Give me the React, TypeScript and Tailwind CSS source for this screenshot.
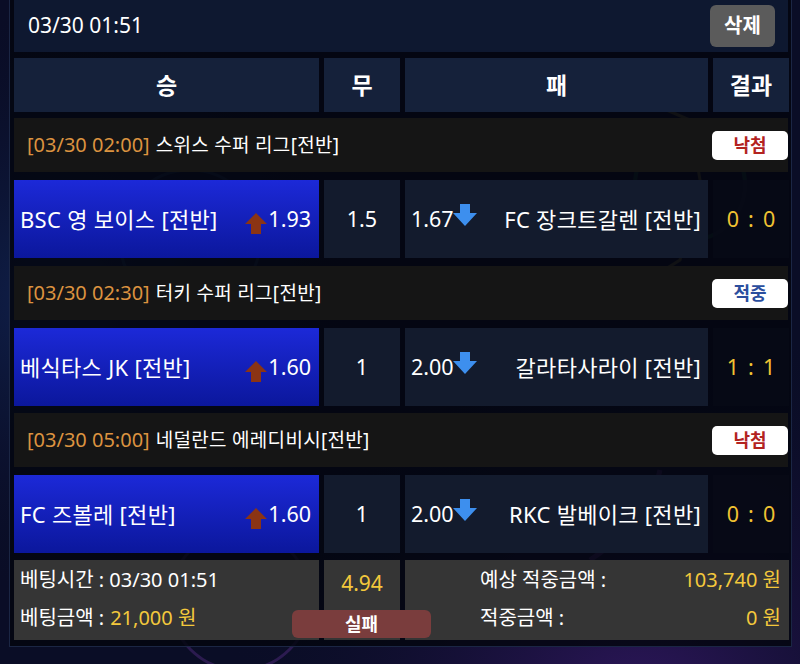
import React from "react";

const FONT = { fontFamily: '"Noto Sans", "Noto Sans CJK KR", sans-serif' };

function UpArrow() {
  return (
    <svg width="22" height="21" viewBox="0 0 22 21" className="shrink-0">
      <path d="M11 0 L22 11 L16 11 L16 21 L6 21 L6 11 L0 11 Z" fill="#8b3414" />
    </svg>
  );
}

function DownArrow() {
  return (
    <svg width="24" height="22" viewBox="0 0 24 22" className="shrink-0">
      <path d="M7 0 L17 0 L17 9 L24 9 L12 22 L0 9 L7 9 Z" fill="#3d8fee" />
    </svg>
  );
}

type Match = {
  time: string;
  league: string;
  status: "낙첨" | "적중";
  home: string;
  homeOdds: string;
  draw: string;
  awayOdds: string;
  away: string;
  score: [string, string];
  mt: string;
};

const matches: Match[] = [
  {
    time: "[03/30 02:00]",
    league: "스위스 수퍼 리그[전반]",
    status: "낙첨",
    home: "BSC 영 보이스 [전반]",
    homeOdds: "1.93",
    draw: "1.5",
    awayOdds: "1.67",
    away: "FC 장크트갈렌 [전반]",
    score: ["0", "0"],
    mt: "mt-[6px]",
  },
  {
    time: "[03/30 02:30]",
    league: "터키 수퍼 리그[전반]",
    status: "적중",
    home: "베식타스 JK [전반]",
    homeOdds: "1.60",
    draw: "1",
    awayOdds: "2.00",
    away: "갈라타사라이 [전반]",
    score: ["1", "1"],
    mt: "mt-[8px]",
  },
  {
    time: "[03/30 05:00]",
    league: "네덜란드 에레디비시[전반]",
    status: "낙첨",
    home: "FC 즈볼레 [전반]",
    homeOdds: "1.60",
    draw: "1",
    awayOdds: "2.00",
    away: "RKC 발베이크 [전반]",
    score: ["0", "0"],
    mt: "mt-[7px]",
  },
];

function MatchBlock({ m }: { m: Match }) {
  return (
    <>
      <div className={`${m.mt} h-[54px] bg-[#151515] flex items-center pl-[13px]`}>
        <span className="text-[#dc9340] text-[20px]">{m.time}</span>
        <span className="text-white ml-[6px] text-[19px] tracking-[0.3px]">{m.league}</span>
        <div
          className={`ml-auto w-[76px] h-[29px] bg-white rounded-[5px] flex items-center justify-center font-bold text-[18px] ${
            m.status === "낙첨" ? "text-[#b3231f]" : "text-[#2b4e9e]"
          }`}
        >
          {m.status}
        </div>
      </div>
      <div className="mt-[8px] h-[78px] grid grid-cols-[305px_76px_303px_76px] gap-x-[5px] text-white text-[21.5px]">
        <div className="bg-gradient-to-b from-[#1c29d8] to-[#0b179c] flex items-center pl-[6px] pr-[8px]">
          <span className="text-[22px] tracking-[0.3px]">{m.home}</span>
          <div className="ml-auto flex items-center gap-[1px]">
            <div className="mt-[8px]">
              <UpArrow />
            </div>
            <span>{m.homeOdds}</span>
          </div>
        </div>
        <div className="bg-[#131b2d] flex items-center justify-center">{m.draw}</div>
        <div className="bg-[#131b2d] flex items-center pl-[6px] pr-[7px]">
          <span>{m.awayOdds}</span>
          <div className="-mt-[8px] -ml-[1px]">
            <DownArrow />
          </div>
          <span className="ml-auto text-[22px] tracking-[0.3px]">{m.away}</span>
        </div>
        <div className="bg-[#070a17]/80 flex items-center justify-center gap-[9px] text-[#f0c232]">
          <span>{m.score[0]}</span>
          <span>:</span>
          <span>{m.score[1]}</span>
        </div>
      </div>
    </>
  );
}

function Background() {
  return (
    <svg className="absolute inset-0" width="800" height="664" viewBox="0 0 800 664">
      <defs>
        <radialGradient id="g1" cx="640" cy="720" r="420" gradientUnits="userSpaceOnUse">
          <stop offset="0" stopColor="#3a1a6e" stopOpacity="0.8" />
          <stop offset="1" stopColor="#0a0d26" stopOpacity="0" />
        </radialGradient>
        <radialGradient id="g2" cx="60" cy="300" r="300" gradientUnits="userSpaceOnUse">
          <stop offset="0" stopColor="#14306a" stopOpacity="0.6" />
          <stop offset="1" stopColor="#0a0d26" stopOpacity="0" />
        </radialGradient>
      </defs>
      <rect width="800" height="664" fill="#0a0d26" />
      <rect width="800" height="664" fill="url(#g2)" />
      <rect width="800" height="664" fill="url(#g1)" />
      <path d="M655 105 L690 120 L700 180 L680 260 L640 285" stroke="#b8a23a" strokeWidth="3" fill="none" opacity="0.45" />
      <circle cx="690" cy="185" r="55" stroke="#1f8a4a" strokeWidth="4" fill="none" opacity="0.35" />
      <circle cx="190" cy="240" r="70" stroke="#3a7ab0" strokeWidth="3" fill="none" opacity="0.25" />
      <circle cx="240" cy="600" r="70" stroke="#7a3ab0" strokeWidth="3" fill="none" opacity="0.3" />
      <path d="M590 560 Q650 520 660 470" stroke="#8a40c0" strokeWidth="5" fill="none" opacity="0.4" />
    </svg>
  );
}

export default function App() {
  return (
    <div className="relative w-[800px] h-[664px] overflow-hidden" style={FONT}>
      <Background />
      <div className="relative pl-[9px]">
        <div className="w-[783px] border-x border-b border-[#1b2644] bg-[#03060f]/85 pl-[4px] pr-[3px] pb-[6px] flex flex-col">
          <div className="h-[52px] bg-[#0e1830] flex items-center justify-between pl-[14px] pr-[13px]">
            <span className="text-white text-[21px]">03/30 01:51</span>
            <div className="w-[65px] h-[42px] bg-[#5b5b5b] rounded-[6px] flex items-center justify-center text-white font-bold text-[20px]">
              삭제
            </div>
          </div>
          <div className="mt-[6px] h-[54px] grid grid-cols-[305px_76px_303px_76px] gap-x-[5px] text-white font-bold text-[23px]">
            <div className="bg-[#15213a] flex items-center justify-center">승</div>
            <div className="bg-[#15213a] flex items-center justify-center">무</div>
            <div className="bg-[#15213a] flex items-center justify-center">패</div>
            <div className="bg-[#15213a] flex items-center justify-center">결과</div>
          </div>
          {matches.map((m, i) => (
            <MatchBlock key={i} m={m} />
          ))}
          <div className="relative mt-[7px] h-[80px] grid grid-cols-[305px_76px_384px] gap-x-[5px] text-[20px] text-white">
            <div className="bg-[#353535] flex flex-col pt-[1px] pl-[6px]">
              <div className="h-[38px] flex items-center">베팅시간 : 03/30 01:51</div>
              <div className="h-[38px] flex items-center">
                베팅금액 : <span className="ml-[6px] text-[#f3c83c]">21,000 원</span>
              </div>
            </div>
            <div className="bg-[#353535] flex justify-center pt-[8px] text-[#f3c83c] text-[21px]">4.94</div>
            <div className="bg-[#353535] flex flex-col pt-[1px] pl-[75px] pr-[8px]">
              <div className="h-[38px] flex items-center">
                <span>예상 적중금액 :</span>
                <span className="ml-auto text-[#f3c83c]">103,740 원</span>
              </div>
              <div className="h-[38px] flex items-center">
                <span>적중금액 :</span>
                <span className="ml-auto text-[#f3c83c]">0 원</span>
              </div>
            </div>
            <div className="absolute left-[278px] top-[50px] w-[139px] h-[28px] rounded-[6px] bg-[#7a3d3d] flex items-center justify-center text-white font-bold text-[18px]">
              실패
            </div>
          </div>
        </div>
      </div>
    </div>
  );
}
